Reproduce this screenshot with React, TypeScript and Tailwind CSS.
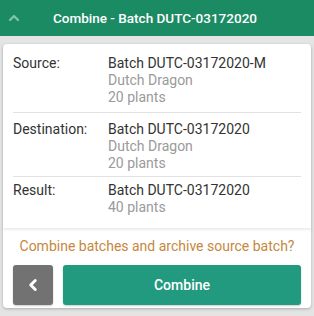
import { ChevronUp, ChevronLeft } from 'lucide-react'

const rows = [
  { label: 'Source:', batch: 'Batch DUTC-03172020-M', strain: 'Dutch Dragon', plants: '20 plants', pad: 'pb-[6px]' },
  { label: 'Destination:', batch: 'Batch DUTC-03172020', strain: 'Dutch Dragon', plants: '20 plants', pad: 'border-t border-[#e2e2e2] pt-[8px] pb-[4px]' },
  { label: 'Result:', batch: 'Batch DUTC-03172020', strain: null, plants: '40 plants', pad: 'border-t border-[#e2e2e2] pt-[5px]' },
]

export default function App() {
  return (
    <div className="w-[314px] h-[316px] bg-[#e4e4e4] text-[14px] font-['Roboto',sans-serif] overflow-hidden">
      {/* Header */}
      <div className="h-9 bg-[#1b8b64] flex items-center relative">
        <ChevronUp size={16} strokeWidth={3.5} className="absolute left-[6px] text-[#7fc4a6]" />
        <div className="flex-1 text-center pr-[4px] text-white text-[13.5px] font-medium">Combine - Batch DUTC-03172020</div>
      </div>

      {/* Panel */}
      <div className="mx-[3px] mt-[8px] bg-white rounded-[4px] shadow-[0_1px_3px_rgba(0,0,0,0.25)] pb-[3px]">
        <div className="px-[10px] pt-[11px] pb-[12px] shadow-[0_2px_2px_rgba(0,0,0,0.08)]">
          {rows.map(r => (
            <div key={r.label} className={`flex leading-[17px] ${r.pad}`}>
              <div className="w-[95px] text-[#333]">{r.label}</div>
              <div>
                <div className="text-[#333]">{r.batch}</div>
                {r.strain && <div className="text-[#9a9a9a]">{r.strain}</div>}
                <div className="text-[#9a9a9a]">{r.plants}</div>
              </div>
            </div>
          ))}
        </div>

        <div className="text-center text-[#c58840] mt-[10px] leading-[17px]">Combine batches and archive source batch?</div>

        <div className="flex gap-[10px] px-[10px] mt-[10px]">
          <button className="w-[40px] h-[40px] rounded-[3px] bg-[#727272] flex items-center justify-center shadow-[0_1px_2px_rgba(0,0,0,0.2)]">
            <ChevronLeft size={18} strokeWidth={4} className="text-white" />
          </button>
          <button className="flex-1 h-[40px] rounded-[3px] bg-[#219a80] text-white text-[14px] font-medium shadow-[0_1px_2px_rgba(0,0,0,0.2)]">
            Combine
          </button>
        </div>
      </div>
    </div>
  )
}
